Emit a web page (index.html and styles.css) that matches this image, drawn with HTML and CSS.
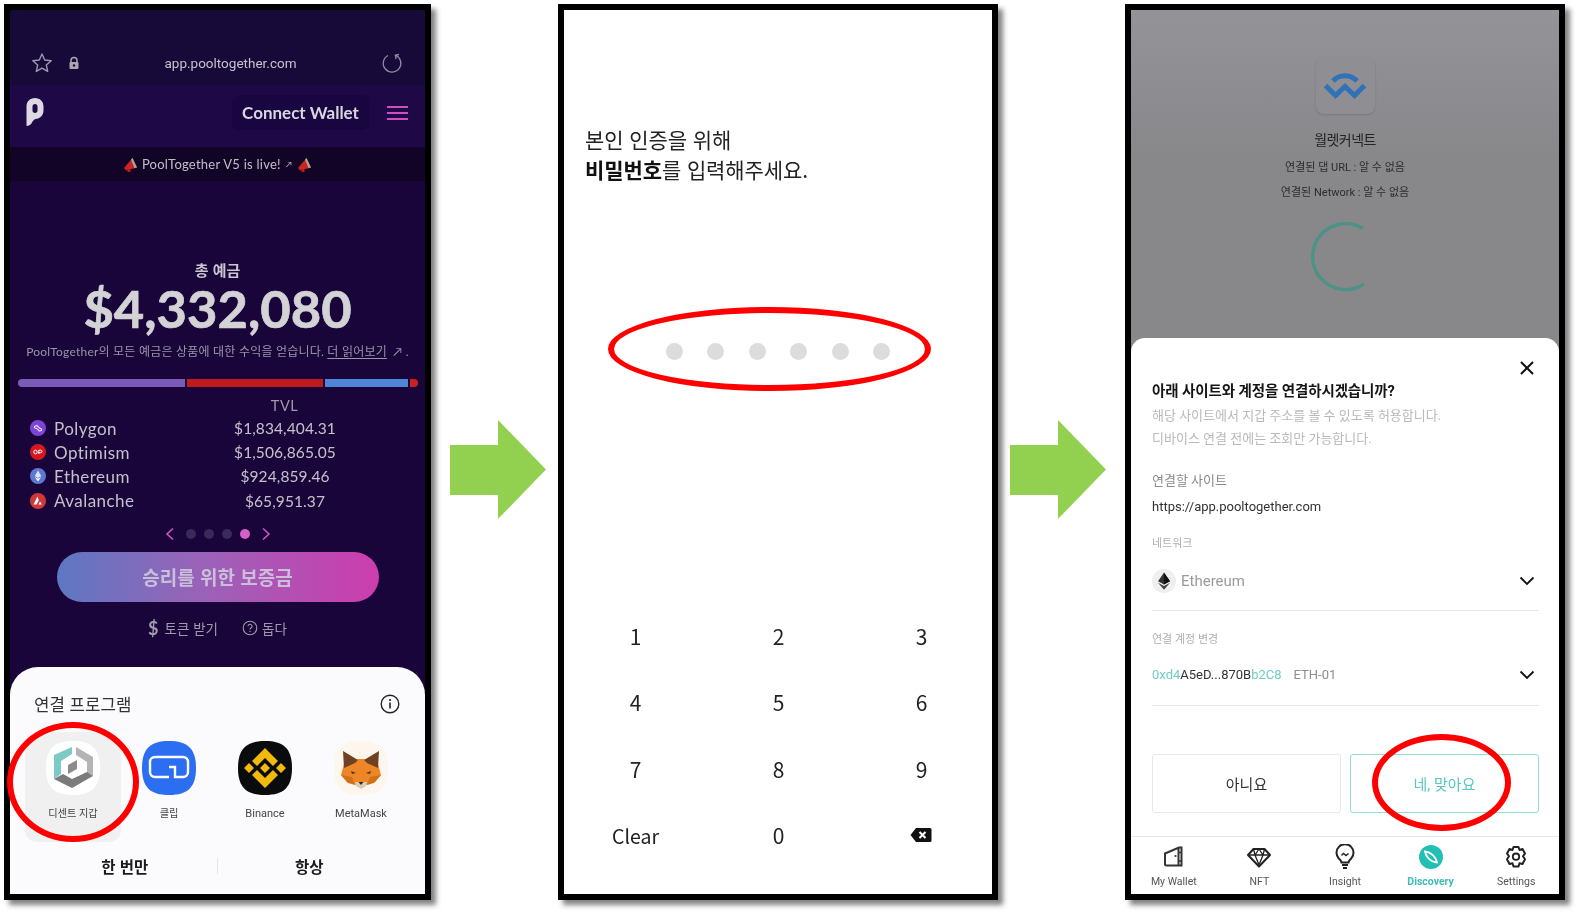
FILE: index.html
```html
<!DOCTYPE html>
<html lang="ko">
<head>
<meta charset="utf-8">
<title>PoolTogether 지갑 연결 안내</title>
<link rel="stylesheet" href="styles.css">
</head>
<body>
<div class="stage">

  <section class="phone phone-a">
    <div class="screen pool">
      <div class="browser">
        <svg class="ico-star" width="22" height="22" viewBox="0 0 22 22"><path d="M11 2l2.7 6 6.5.7-4.9 4.3 1.4 6.4L11 16.100l-5.700 3.300 1.400-6.400-4.900-4.300 6.500-.7z" fill="none" stroke="#9d99ac" stroke-width="1.400" stroke-linejoin="round"/></svg>
        <svg class="ico-lock" width="12" height="14" viewBox="0 0 12 14"><path d="M3 6V4.500a3 3 0 0 1 6 0V6" fill="none" stroke="#aaa6b4" stroke-width="1.500"/><rect x="1.500" y="6" width="9" height="7" rx="1" fill="#aaa6b4"/><circle cx="6" cy="9.500" r="1.200" fill="#170a38"/></svg>
        <span class="url">app.pooltogether.com</span>
        <svg class="ico-reload" width="22" height="22" viewBox="0 0 22 22"><path d="M14.500 3.200A8.800 8.800 0 1 1 7 3.500" fill="none" stroke="#8f8b9e" stroke-width="1.300"/><path d="M18 2.500l-3.700.7.800 4" fill="none" stroke="#8f8b9e" stroke-width="1.300"/></svg>
      </div>
      <header class="nav">
        <svg class="logo-p" width="18" height="28" viewBox="0 0 18 28"><path fill-rule="evenodd" d="M9 0c5 0 8.500 3.500 8.500 8.500v4c0 5-3.500 8-8 8.500-1.500.5-3 2-3.500 3.500-1 2-3 3.500-5.500 3.500V8.500C.5 3.500 4 0 9 0zm0 6c-1.500 0-2.500 1-2.500 2.500v4c0 1.500 1 2.500 2.500 2.500s2.500-1 2.500-2.500v-4C11.500 7 10.500 6 9 6z" fill="#dcd8e4"/></svg>
        <div class="nav-right">
          <span class="connect">Connect Wallet</span>
          <span class="burger"><i></i><i></i><i></i></span>
        </div>
      </header>
      <div class="notice">
        <svg width="15" height="15" viewBox="0 0 15 15"><path d="M9.500 1L14 10.500 3 13.500 1 11z" fill="#c9241f"/><path d="M9.500 1L14 10.500l-2.500.7L8 2.500z" fill="#a6a2a4"/><rect x="4.500" y="12" width="3" height="3" fill="#b51d1a"/></svg>
        <span>PoolTogether V5 is live!</span><span class="notice-arrow">↗</span>
        <svg width="15" height="15" viewBox="0 0 15 15"><path d="M9.500 1L14 10.500 3 13.500 1 11z" fill="#c9241f"/><path d="M9.500 1L14 10.500l-2.500.7L8 2.500z" fill="#a6a2a4"/><rect x="4.500" y="12" width="3" height="3" fill="#b51d1a"/></svg>
      </div>
      <main class="pool-main">
        <div class="total-label">총 예금</div>
        <div class="total">$4,332,080</div>
        <p class="desc">PoolTogether의 모든 예금은 상품에 대한 수익을 얻습니다. <u>더 읽어보기</u> <span class="desc-arrow">↗</span> .</p>
        <div class="bar"><i class="seg-poly"></i><i class="seg-op"></i><i class="seg-eth"></i><i class="seg-ava"></i></div>
        <div class="tvl-head">TVL</div>
        <ul class="chains">
          <li><svg width="16" height="16" viewBox="0 0 16 16"><circle cx="8" cy="8" r="8" fill="#7d45d6"/><path d="M4.500 6.500l2.300-1 2.700 2.500 2 1v1.300l-2 .9-2.500-2.400-2.500-1.100z" fill="none" stroke="#e9defc" stroke-width="1.100"/></svg><span class="cname">Polygon</span><span class="cval">$1,834,404.31</span></li>
          <li><svg width="16" height="16" viewBox="0 0 16 16"><circle cx="8" cy="8" r="8" fill="#d3191f"/><ellipse cx="5.500" cy="8" rx="1.700" ry="1.900" fill="none" stroke="#fff" stroke-width="1"/><path d="M8.800 10V6.200h1.900a1.200 1.200 0 0 1 0 2.500H8.800" fill="none" stroke="#fff" stroke-width="1"/></svg><span class="cname">Optimism</span><span class="cval">$1,506,865.05</span></li>
          <li><svg width="16" height="16" viewBox="0 0 16 16"><circle cx="8" cy="8" r="8" fill="#5c78d4"/><path d="M8 2.500L4.800 8 8 10l3.200-2z" fill="#dfe5f8"/><path d="M8 10.800L4.800 8.900 8 13.500l3.200-4.600z" fill="#fff"/></svg><span class="cname">Ethereum</span><span class="cval">$924,859.46</span></li>
          <li><svg width="16" height="16" viewBox="0 0 16 16"><circle cx="8" cy="8" r="8" fill="#cf3a38"/><path d="M7.500 3.500L3.500 11.500h3l2.300-4.300zM10 8.500l-1.700 3h3.500z" fill="#fff"/></svg><span class="cname">Avalanche</span><span class="cval">$65,951.37</span></li>
        </ul>
        <div class="pager">
          <svg width="10" height="14" viewBox="0 0 10 14"><path d="M8 1.500L2 7l6 5.500" fill="none" stroke="#cf55c2" stroke-width="1.600"/></svg>
          <i class="pdot"></i><i class="pdot"></i><i class="pdot"></i><i class="pdot pdot-on"></i>
          <svg width="10" height="14" viewBox="0 0 10 14"><path d="M2 1.500L8 7l-6 5.500" fill="none" stroke="#cf55c2" stroke-width="1.600"/></svg>
        </div>
        <div class="cta">승리를 위한 보증금</div>
        <div class="links">
          <span class="dollar">$</span><span>토큰 받기</span>
          <svg class="help" width="16" height="16" viewBox="0 0 16 16"><circle cx="8" cy="8" r="6.800" fill="none" stroke="#9f9bab" stroke-width="1.100"/><path d="M6 6.300a2 2 0 1 1 3 1.700c-.7.400-1 .8-1 1.500" fill="none" stroke="#9f9bab" stroke-width="1.100"/><circle cx="8" cy="11.500" r=".7" fill="#9f9bab"/></svg><span>돕다</span>
        </div>
      </main>
      <div class="picker">
        <div class="picker-head">
          <span>연결 프로그램</span>
          <svg width="20" height="20" viewBox="0 0 20 20"><circle cx="10" cy="10" r="8.800" fill="none" stroke="#222" stroke-width="1.400"/><rect x="9.200" y="8.500" width="1.600" height="6" fill="#222"/><circle cx="10" cy="6" r="1.100" fill="#222"/></svg>
        </div>
        <div class="apps">
          <div class="app app-on">
            <svg width="54" height="54" viewBox="0 0 54 54"><path d="M27 0C46 0 54 8 54 27S46 54 27 54 0 46 0 27 8 0 27 0Z" fill="#fff"/><path d="M8 14l18-8v7l-11 7v13l-7 5z" fill="#7cc9c5"/><path d="M30 6l17 10v19l-6-3.500V21L30 14z" fill="#b4b4b4"/><path d="M8 38l9-5 9 5 15-7 6 4-21 12z" fill="#7b7b7b"/><path d="M22 24l9-5v9l-9 5z" fill="#8c8c8c"/></svg>
            <span class="app-name app-name-ko">디센트 지갑</span>
          </div>
          <div class="app">
            <svg width="54" height="54" viewBox="0 0 54 54"><path d="M27 0C46 0 54 8 54 27S46 54 27 54 0 46 0 27 8 0 27 0Z" fill="#2b6ef2"/><path d="M27 36H13a5 5 0 0 1-5-5V21a5 5 0 0 1 5-5h28a5 5 0 0 1 5 5v10a5 5 0 0 1-5 5h-8V26h-6" fill="none" stroke="#fff" stroke-width="2.400"/></svg>
            <span class="app-name app-name-ko">클립</span>
          </div>
          <div class="app">
            <svg width="54" height="54" viewBox="0 0 54 54"><path d="M27 0C46 0 54 8 54 27S46 54 27 54 0 46 0 27 8 0 27 0Z" fill="#0a0b0d"/><path d="M27 22l5 5-5 5-5-5zM11 22l5 5-5 5-5-5zM43 22l5 5-5 5-5-5zM27 7l13 13-5 5-8-8-8 8-5-5zM27 47L14 34l5-5 8 8 8-8 5 5z" fill="#f0b90b"/></svg>
            <span class="app-name">Binance</span>
          </div>
          <div class="app">
            <svg width="54" height="54" viewBox="0 0 54 54"><path d="M27 0C46 0 54 8 54 27S46 54 27 54 0 46 0 27 8 0 27 0Z" fill="#fdf6ec"/><path d="M10 23l14-5h6l14 5 3 11-6 7-9 3h-10l-9-3-6-7z" fill="#ec8627"/><path d="M9 10l15 9-3 3-11 5zM45 10L30 19l3 3 11 5z" fill="#6f4122"/><path d="M7 34l11 2 3 8-7-2zM47 34l-11 2-3 8 7-2z" fill="#d2701a"/><path d="M21 41h12l-1 4-5 3-5-3z" fill="#d9cbb4"/><path d="M24.500 41h5L27 44z" fill="#3a2a1e"/><path d="M17 30l5 2-4 1zM37 30l-5 2 4 1z" fill="#5a3518"/></svg>
            <span class="app-name">MetaMask</span>
          </div>
        </div>
        <div class="choice"><span>한 번만</span><i class="choice-sep"></i><span>항상</span></div>
      </div>
    </div>
    <i class="ring ring-a"></i>
  </section>

  <svg class="arrow arrow-a" width="96" height="99" viewBox="0 0 96 99"><path d="M0 25h48V0l48 49.500-48 49.500V75H0z" fill="#92d050"/></svg>

  <section class="phone phone-b">
    <div class="screen pin">
      <h1 class="pin-title">본인 인증을 위해<br><b>비밀번호</b>를 입력해주세요.</h1>
      <div class="pin-dots"><i></i><i></i><i></i><i></i><i></i><i></i></div>
      <div class="keys">
        <span>1</span><span>2</span><span>3</span>
        <span>4</span><span>5</span><span>6</span>
        <span>7</span><span>8</span><span>9</span>
        <span class="key-clear">Clear</span><span>0</span>
        <span><svg class="key-back" width="22" height="16" viewBox="0 0 22 16"><path d="M6 1h14a1.500 1.500 0 0 1 1.500 1.500v11A1.500 1.500 0 0 1 20 15H6L.5 8z" fill="#111"/><path d="M9.500 5l6 6M15.500 5l-6 6" stroke="#fff" stroke-width="2"/></svg></span>
      </div>
    </div>
    <i class="ring ring-b"></i>
  </section>

  <svg class="arrow arrow-b" width="96" height="99" viewBox="0 0 96 99"><path d="M0 25h48V0l48 49.500-48 49.500V75H0z" fill="#92d050"/></svg>

  <section class="phone phone-c">
    <div class="screen wc">
      <div class="wc-back">
        <div class="wc-logo"><svg width="42" height="28" viewBox="0 0 42 28"><path d="M9 9c6.500-7 17.500-7 24 0M1.500 13.500l10 10 9.500-9 9.500 9 10-10" fill="none" stroke="#2f72b8" stroke-width="5"/></svg></div>
        <div class="wc-name">월렛커넥트</div>
        <div class="wc-line">연결된 댑 URL : 알 수 없음</div>
        <div class="wc-line wc-line-2">연결된 Network : 알 수 없음</div>
        <svg class="wc-spin" width="70" height="70" viewBox="0 0 70 70"><path d="M53 6.500A33 33 0 1 0 54 62" fill="none" stroke="#4c9287" stroke-width="3.400"/></svg>
      </div>
      <div class="sheet">
        <div class="sheet-close"><svg width="14" height="14" viewBox="0 0 14 14"><path d="M1 1l12 12M13 1L1 13" stroke="#111" stroke-width="2"/></svg></div>
        <h2 class="sheet-title">아래 사이트와 계정을 연결하시겠습니까?</h2>
        <p class="sheet-sub sheet-sub-1">해당 사이트에서 지갑 주소를 볼 수 있도록 허용합니다.</p>
        <p class="sheet-sub">디바이스 연결 전에는 조회만 가능합니다.</p>
        <div class="site-label">연결할 사이트</div>
        <div class="site-url">https://app.pooltogether.com</div>
        <div class="mini-label mini-net">네트워크</div>
        <div class="select select-net">
          <span class="select-main">
            <svg width="24" height="24" viewBox="0 0 24 24"><circle cx="12" cy="12" r="12" fill="#efefef"/><path d="M12 3.500L6 12.200l6 3.300 6-3.300z" fill="#333"/><path d="M12 3.500v12l6-3.300z" fill="#111"/><path d="M6 13.800l6 7 6-7-6 3.200z" fill="#444"/></svg>
            <span class="net-name">Ethereum</span>
          </span>
          <svg class="chev" width="16" height="10" viewBox="0 0 16 10"><path d="M1.500 1.500L8 8l6.500-6.500" fill="none" stroke="#111" stroke-width="1.800"/></svg>
        </div>
        <div class="mini-label mini-acc">연결 계정 변경</div>
        <div class="select select-acc">
          <span class="select-main addr"><span class="teal">0xd4</span>A5eD...870B<span class="teal">b2C8</span><span class="acc-name">ETH-01</span></span>
          <svg class="chev chev-acc" width="16" height="10" viewBox="0 0 16 10"><path d="M1.500 1.500L8 8l6.500-6.500" fill="none" stroke="#111" stroke-width="1.800"/></svg>
        </div>
        <div class="sheet-btns"><span class="btn btn-no">아니요</span><span class="btn btn-yes">네, 맞아요</span></div>
      </div>
      <nav class="tabs">
        <div class="tab"><svg width="26" height="26" viewBox="0 0 26 26"><path d="M4 9.500L18 3.500h2.500v18H5.500A1.500 1.500 0 0 1 4 20zM17.500 4v17.500" fill="none" stroke="#333" stroke-width="2"/><path d="M17.500 8.500h3M17.500 17h3" stroke="#333" stroke-width="1.500"/><circle cx="14.500" cy="12" r="1.100" fill="#333"/></svg><span>My Wallet</span></div>
        <div class="tab"><svg width="26" height="26" viewBox="0 0 26 26"><path d="M7.500 5h11L24 11 13 22.500 2 11z" fill="none" stroke="#222" stroke-width="2" stroke-linejoin="round"/><path d="M2.500 11h21M7.500 5l1.500 6 4 10 4-10 1.500-6M13 5l-4 6M13 5l4 6" fill="none" stroke="#222" stroke-width="1.300"/></svg><span>NFT</span></div>
        <div class="tab"><svg width="26" height="26" viewBox="0 0 26 26"><path d="M9.500 18.500c-.3-1.800-1.400-2.800-2.700-4a8.500 8.500 0 1 1 12.400 0c-1.300 1.200-2.400 2.200-2.700 4z" fill="none" stroke="#222" stroke-width="2"/><path d="M9.500 11.500l2-2 2.500 2 2.500-2" fill="none" stroke="#222" stroke-width="1.400"/><path d="M10 21h6M11 24h4" stroke="#222" stroke-width="1.800"/></svg><span>Insight</span></div>
        <div class="tab tab-on"><svg width="26" height="26" viewBox="0 0 26 26"><circle cx="13" cy="13" r="12" fill="#22c0b4"/><path d="M7 7.500c6 .5 11 5.500 12 11-6-.5-11-5-12-11z" fill="none" stroke="#fff" stroke-width="1.800"/></svg><span>Discovery</span></div>
        <div class="tab"><svg width="26" height="26" viewBox="0 0 26 26"><path d="M10.500 3h5l1 3 3-1 2.500 4.500-2 2.800 2 2.900L19.500 20l-3-.8-1 3.300h-5l-1-3.300-3 .8L4 15.200l2-2.900-2-2.800L6.500 5l3 1z" fill="none" stroke="#222" stroke-width="2" stroke-linejoin="round"/><circle cx="13" cy="12.700" r="3.200" fill="none" stroke="#222" stroke-width="1.800"/></svg><span>Settings</span></div>
      </nav>
    </div>
    <i class="ring ring-c"></i>
  </section>

</div>
</body>
</html>
```

FILE: styles.css
```css
* { box-sizing: border-box; }
html, body { margin: 0; padding: 0; background: #fff; }
body { width: 1578px; height: 913px; overflow: hidden; font-family: "Noto Sans CJK KR", "Noto Sans", sans-serif; }
i { display: block; font-style: normal; }
h1, h2, p, ul { margin: 0; padding: 0; font-weight: 400; }
ul { list-style: none; }

.stage { display: flex; align-items: flex-start; padding: 4px 0 0 4px; }

.phone { position: relative; flex: none; height: 896px; border: 6px solid #000; box-shadow: 5px 5px 5px rgba(90, 90, 90, .75); }
.phone-a { width: 427px; }
.phone-b, .phone-c { width: 440px; }
.screen { width: 100%; height: 100%; overflow: hidden; display: flex; flex-direction: column; filter: blur(.4px); }

.arrow { flex: none; margin-top: 416px; }
.arrow-a { margin-left: 19px; margin-right: 12px; }
.arrow-b { margin-left: 12px; margin-right: 19px; }

.ring { position: absolute; border: 6px solid #f00; border-radius: 50%; }
.ring-a { left: -3px; top: 712px; width: 132px; height: 120px; }
.ring-b { left: 44px; top: 297px; width: 323px; height: 84px; }
.ring-c { left: 241px; top: 724px; width: 139px; height: 97px; }

/* Phone A */
.pool { background: #1a053a; font-family: Lato, "Noto Sans CJK KR", sans-serif; }
.browser { flex: none; height: 75px; padding: 30px 22px 0 21px; background: #170a38; display: flex; align-items: center; }
.ico-star { flex: none; }
.ico-lock { flex: none; margin-left: 15px; }
.url { flex: 1; text-align: center; font: 13.500px Roboto, sans-serif; color: #c6c2cf; }
.ico-reload { flex: none; }
.nav { flex: none; height: 62px; background: #1e0845; display: flex; align-items: center; justify-content: space-between; padding: 0 17px 0 16px; }
.logo-p { margin-top: -8px; }
.nav-right { display: flex; align-items: center; gap: 18px; margin-top: -7px; }
.connect { display: block; width: 137px; height: 35px; line-height: 35px; text-align: center; background: #190640; border-radius: 7px; color: #d9d6de; font-size: 17px; font-weight: 700; }
.burger { display: flex; flex-direction: column; gap: 4px; width: 21px; }
.burger i { height: 2px; background: #cc50c2; }
.notice { flex: none; height: 34px; background: #110426; display: flex; align-items: center; justify-content: center; gap: 4px; color: #c2bec8; font-size: 13px; letter-spacing: .25px; }
.notice-arrow { font-size: 8px; margin: 0 1px; }
.pool-main { flex: 1; min-height: 0; text-align: center; color: #a29eae; }
.total-label { margin-top: 79px; height: 20px; font: 700 15px/20px "Noto Sans CJK KR", sans-serif; color: #c9c7d0; }
.total { height: 58px; line-height: 56px; font-size: 52.500px; font-weight: 700; color: #d3d3d6; -webkit-text-stroke: .7px #d3d3d6; }
.desc { margin-top: 5px; height: 18px; line-height: 18px; font-size: 12px; color: #9a95a8; white-space: nowrap; letter-spacing: .22px; }
.desc u { text-underline-offset: 2px; }
.desc-arrow { font-size: 12px; margin-left: 3px; }
.bar { margin: 18px 7px 0 8px; height: 8px; display: flex; gap: 2px; }
.bar i { height: 8px; }
.seg-poly { width: 167px; background: #7a5cb8; border-radius: 4px 0 0 4px; }
.seg-op { width: 136px; background: #bf1a1e; }
.seg-eth { width: 83px; background: #4f86d6; }
.seg-ava { width: 8px; background: #c92020; border-radius: 0 4px 4px 0; }
.tvl-head { margin-top: 9px; height: 20px; line-height: 20px; padding-left: 134px; font-size: 14.500px; letter-spacing: .5px; color: #9f9bab; }
.chains li { height: 24.200px; display: flex; align-items: center; padding-left: 20px; font-size: 17px; color: #c4c1cc; letter-spacing: .45px; }
.chains svg { flex: none; }
.cname { width: 151px; margin-left: 8px; text-align: left; }
.cval { width: 160px; text-align: center; font-size: 15.500px; letter-spacing: .1px; }
.pager { margin-top: 14px; height: 14px; display: flex; justify-content: center; align-items: center; gap: 8px; }
.pdot { width: 10px; height: 10px; border-radius: 50%; background: #3a2a57; }
.pdot-on { background: #d45fc8; }
.pager svg:first-child { margin-right: 3px; }
.pager svg:last-child { margin-left: 3px; }
.cta { margin: 11px auto 0; width: 322px; height: 50px; border-radius: 25px; background: linear-gradient(90deg, #5d78c2, #9a62b8 45%, #cd3dae); color: #c9bfdb; font: 700 19px/49px "Noto Sans CJK KR", sans-serif; }
.links { margin-top: 16px; height: 20px; display: flex; justify-content: center; align-items: center; font: 13.500px/20px "Noto Sans CJK KR", sans-serif; color: #9f9bab; }
.dollar { font: 700 18px Lato, sans-serif; margin-right: 6px; }
.help { margin: 0 4px 0 24px; }

.picker { flex: none; height: 227px; background: #fbfbfd; border-radius: 28px 28px 0 0; font-family: "Noto Sans CJK KR", sans-serif; }
.picker-head { display: flex; justify-content: space-between; align-items: center; height: 49px; padding: 25px 25px 0 24px; color: #333; font-size: 16.800px; }
.apps { display: grid; grid-template-columns: repeat(4, 96px); margin: 16px 0 0 15px; }
.app { height: 110px; padding-top: 9px; display: flex; flex-direction: column; align-items: center; border-radius: 12px; }
.app-on { background: #f0f0f0; }
.app-name { margin-top: 11px; font: 11px/16px Roboto, "Noto Sans CJK KR", sans-serif; color: #444; }
.app-name-ko { font-size: 10.200px; }
.choice { display: flex; align-items: center; margin-top: 12px; padding: 0 24px 0 23px; height: 24px; color: #1a1a1a; font-size: 15.500px; font-weight: 700; }
.choice span { flex: 1; text-align: center; }
.choice-sep { width: 1px; height: 16px; background: #e4e4e4; }

/* Phone B */
.pin { background: #fff; color: #222; }
.pin-title { padding: 114px 0 0 21px; font-size: 21px; line-height: 30px; letter-spacing: -.1px; }
.pin-title b { font-weight: 700; color: #111; }
.pin-dots { display: flex; gap: 24.600px; margin: 158.500px 0 0 101.500px; }
.pin-dots i { width: 17px; height: 17px; border-radius: 50%; background: #dcdcdc; }
.keys { display: grid; grid-template-columns: repeat(3, 143px); grid-auto-rows: 66.300px; margin-top: 243.500px; font-size: 21px; color: #222; }
.keys span { display: flex; align-items: center; justify-content: center; }
.keys .key-clear { font-size: 19.500px; }
.key-back { margin: -1px 2px 0 0; }

/* Phone C */
.wc { background: #88888b; font-family: Roboto, "Noto Sans CJK KR", sans-serif; }
.wc-back { flex: none; height: 328px; padding-top: 47px; background: linear-gradient(#949398, #88888b 45%); display: flex; flex-direction: column; align-items: center; }
.wc-logo { width: 59px; height: 57px; border-radius: 8px; background: #8f8e93; box-shadow: 0 1px 2px rgba(0, 0, 0, .15); display: flex; align-items: center; justify-content: center; }
.wc-name { margin-top: 15px; height: 22px; line-height: 22px; font-size: 14px; letter-spacing: -.6px; color: #232325; }
.wc-line { margin-top: 9px; height: 16px; line-height: 16px; font-size: 11px; color: #2c2c2e; }
.wc-line-2 { margin-top: 9px; }
.wc-spin { margin-top: 21px; }
.sheet { flex: 1; min-height: 0; background: #fff; border-radius: 14px 14px 0 0; padding: 23px 20px 0 21px; }
.sheet-close { display: flex; justify-content: flex-end; padding-right: 5px; height: 14px; }
.sheet-title { margin-top: 6px; height: 22px; line-height: 22px; font-size: 14.500px; font-weight: 700; color: #151515; letter-spacing: -.1px; }
.sheet-sub { height: 22px; line-height: 22px; font-size: 13px; color: #b9b9b9; }
.sheet-sub-1 { margin-top: 2px; height: 23px; }
.site-label { margin-top: 21px; height: 20px; line-height: 20px; font-size: 13px; color: #8a8a8a; }
.site-url { margin-top: 6px; height: 20px; line-height: 20px; font-size: 13px; color: #333; }
.mini-label { height: 16px; line-height: 16px; font-size: 11px; color: #b0b0b0; }
.mini-net { margin-top: 19px; }
.mini-acc { margin-top: 21px; }
.select { display: flex; justify-content: space-between; align-items: center; border-bottom: 1px solid #e6e6e6; padding-right: 4px; }
.select-net { margin-top: 17px; height: 42px; padding-bottom: 17px; }
.select-acc { margin-top: 16px; height: 42px; padding-bottom: 21px; }
.chev-acc { margin-top: 2px; }
.select-main { display: flex; align-items: center; }
.net-name { margin-left: 5px; font-size: 15px; color: #9a9a9a; }
.addr { font-size: 13px; color: #333; }
.teal { color: #6fcdc4; }
.acc-name { margin-left: 12px; color: #8e8e8e; }
.sheet-btns { display: flex; gap: 9px; margin-top: 48px; }
.btn { width: 189px; height: 59px; display: flex; align-items: center; justify-content: center; border-radius: 3px; font-size: 15px; }
.btn-no { border: 1px solid #e8e8e8; color: #333; }
.btn-yes { border: 1px solid #8fdcd3; color: #55c9bf; }
.tabs { flex: none; height: 58px; border-top: 1px solid #e6e6e6; display: grid; grid-template-columns: repeat(5, 1fr); background: #fff; }
.tab { display: flex; flex-direction: column; align-items: center; padding-top: 7px; font-size: 10.500px; line-height: 14px; color: #555; }
.tab span { margin-top: 5px; }
.tab-on { color: #3fbdb4; font-weight: 700; }
```
